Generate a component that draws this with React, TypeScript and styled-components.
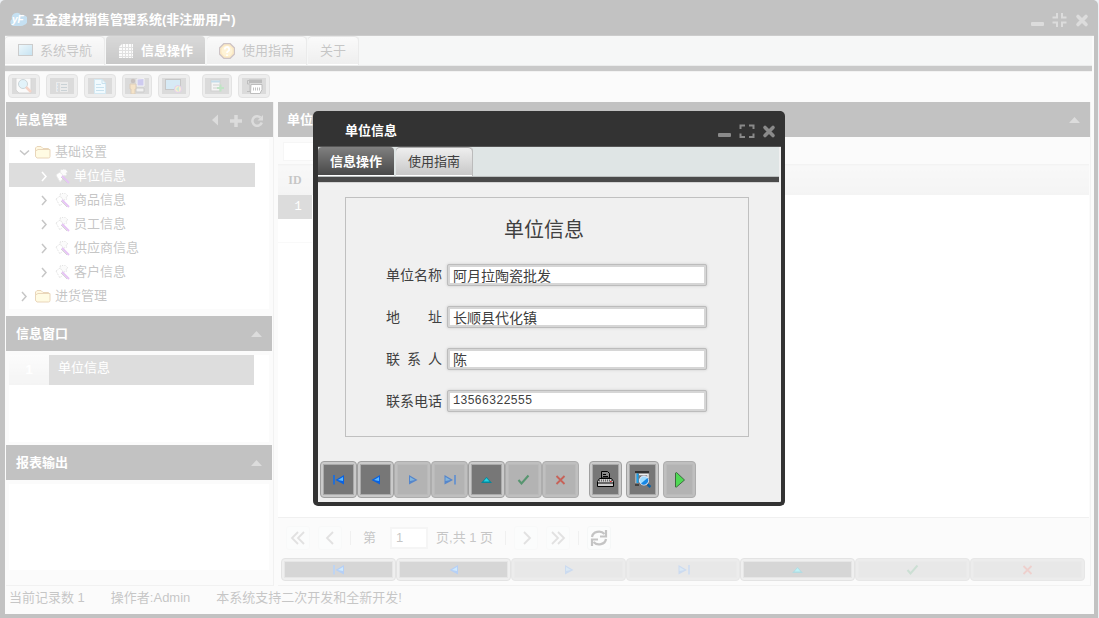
import React from 'react';
import styled, { createGlobalStyle, css } from 'styled-components';

const sans = `"Liberation Sans", "Noto Sans CJK SC", sans-serif`;
const mono = `"Liberation Mono", "Noto Sans CJK SC", monospace`;

const GlobalStyle = createGlobalStyle`
  *, *::before, *::after { box-sizing: border-box; }
  body {
    margin: 0;
    background: #c4cfdc;
    color: #404040;
    font-family: ${sans};
    font-size: 13px;
    line-height: 20px;
  }
  button, input, h1, h2, h3, ul, table, th, td { font: inherit; color: inherit; margin: 0; padding: 0; }
  button { border: 0; background: none; }
  svg { display: block; flex: none; }
`;

/* ---------- window frame ---------- */

const AppWindow = styled.div`
  display: flex;
  flex-direction: column;
  min-height: 100vh;
  margin-right: 1px;
  border: solid #333;
  border-width: 0 4px 4px 5px;
  border-radius: 5px 5px 0 0;
  background: #f0f0f0;
`;

const TitleBar = styled.header`
  display: flex;
  align-items: center;
  height: 36px;
  padding: 4px 4px 0 4px;
  gap: 5px;
  background: #333;
  border-bottom: 1px solid #555;
  color: #fff;
`;

const WindowTitle = styled.h1`
  flex: 1;
  font-weight: bold;
`;

const Controls = styled.div`
  display: flex;
  gap: 6px;
`;

const IconButton = styled.button`
  display: flex;
  align-items: center;
  justify-content: center;
  width: 16px;
  height: 16px;
  color: #8a8a8a;
`;

/* ---------- tabs ---------- */

const TabStrip = styled.nav`
  display: flex;
  gap: 2px;
  height: 35px;
  margin-right: 2px;
  background: #dfe5e5;
  border-bottom: 5px solid #4a4a4a;
  box-shadow: inset 0 -1px #bcc0c0, 0 1px #d4d4d4;
`;

const Tab = styled.button<{ $active?: boolean }>`
  display: flex;
  align-items: center;
  gap: 7px;
  height: 29px;
  padding: 2px 12px 0;
  border-radius: 4px 4px 0 0;
  border-bottom: 1px solid #fff;
  background: linear-gradient(#f0f0f0, #c8c8c8);
  box-shadow: inset 0 1px #aaa, 1px 0 #bbb;
  ${(p) =>
    p.$active &&
    css`
      background: linear-gradient(#808080, #484848);
      box-shadow: none;
      color: #fff;
      font-weight: bold;
    `}
`;

/* ---------- buttons ---------- */

const FramedButton = styled.button<{ $tall?: boolean; $fluid?: boolean; $width?: number }>`
  display: flex;
  flex: ${(p) => (p.$fluid ? '1 1 0' : 'none')};
  width: ${(p) => (p.$fluid ? 'auto' : `${p.$width ?? 32}px`)};
  height: ${(p) => (p.$tall ? 37 : 23)}px;
  padding: 2px;
  border: 1px solid #a0a0a0;
  border-radius: 4px;
  background: #cacaca;
  &:disabled {
    border-color: #adadad;
    background: #bfbfbf;
  }
`;

const ButtonFace = styled.span`
  display: flex;
  flex: 1;
  align-items: center;
  justify-content: center;
  border: 1px solid #aaa;
  background: #777;
  ${FramedButton}:disabled & {
    border-color: #bababa;
    background: #b3b3b3;
  }
`;

const ToolButton = styled.button<{ $narrow?: boolean; $gapAfter?: boolean }>`
  display: flex;
  align-items: center;
  justify-content: center;
  width: ${(p) => (p.$narrow ? 30 : 32)}px;
  height: 24px;
  margin-right: ${(p) => (p.$gapAfter ? 6 : 0)}px;
  border: 1px solid #a0a0a0;
  border-radius: 4px;
  background: #c6c6c6;
`;

const ToolFace = styled.span`
  display: flex;
  align-items: center;
  justify-content: center;
  width: 24px;
  height: 16px;
  background: #868686;
`;

const Toolbar = styled.div`
  display: flex;
  gap: 6px;
  padding: 3px 3px 4px;
`;

/* ---------- work area ---------- */

const WorkArea = styled.main`
  display: grid;
  grid-template-columns: 268px minmax(0, 1fr);
  gap: 4px;
  flex: 1;
  padding: 0 3px 0 1px;
`;

const Sidebar = styled.aside`
  display: flex;
  flex-direction: column;
  border: solid #d0d0d0;
  border-width: 0 1px 1px 0;
`;

const Section = styled.section<{ $grow?: boolean }>`
  display: flex;
  flex-direction: column;
  flex: ${(p) => (p.$grow ? 1 : 'none')};
`;

const PanelHeader = styled.header<{ $wide?: boolean }>`
  display: flex;
  align-items: center;
  gap: 5px;
  height: 35px;
  margin-right: ${(p) => (p.$wide ? 0 : 1)}px;
  padding: 0 8px 0 ${(p) => (p.$wide ? 9 : 10)}px;
  background: #333;
  color: #fff;
`;

const PanelTitle = styled.h2`
  flex: 1;
  font-weight: bold;
`;

const Tree = styled.ul`
  height: 170px;
  margin: 2px 4px 7px 3px;
  background: #fff;
  list-style: none;
`;

const TreeRow = styled.li<{ $child?: boolean; $selected?: boolean }>`
  display: flex;
  align-items: center;
  gap: 5px;
  height: 24px;
  margin-right: 14px;
  padding: 2px 0 0 ${(p) => (p.$child ? 30 : 10)}px;
  ${(p) =>
    p.$selected &&
    css`
      background: #8e8e8e;
      color: #fff;
    `}
`;

const TreeLabel = styled.span`
  margin-left: -1px;
`;

const Sheet = styled.div<{ $height?: number }>`
  height: ${(p) => (p.$height ? `${p.$height}px` : 'auto')};
  flex: ${(p) => (p.$height ? 'none' : 1)};
  margin: 4px 4px 3px 3px;
  background: #fff;
`;

const EmptySheet = styled(Sheet)`
  margin-bottom: 15px;
`;

const RecordTable = styled.table`
  width: 245px;
  border-collapse: collapse;
  tr { height: 30px; }
  th {
    width: 40px;
    background: linear-gradient(#f4f4f4, #dadada);
    color: #fff;
    font-weight: bold;
  }
  td {
    padding: 0 9px 4px;
    background: #8e8e8e;
    color: #fff;
  }
`;

const Content = styled.section`
  display: flex;
  flex-direction: column;
  border: solid #d4d4d4;
  border-width: 0 1px 1px 0;
`;

const SearchRow = styled.div`
  padding: 4px 5px;
  height: 27px;
`;

const SearchInput = styled.input`
  width: 160px;
  height: 19px;
  border: 1px solid #e0e0e0;
  background: #fff;
`;

const DataGrid = styled.div`
  flex: 1;
  margin-right: 1px;
  border-bottom: 1px solid #ccc;
  background: #fff;
`;

const GridTable = styled.table`
  width: 100%;
  border-collapse: collapse;
  font-family: ${mono};
  font-size: 12px;
  th {
    height: 30px;
    border-top: 1px solid #d8d8d8;
    background: linear-gradient(#e8e8e8, #dadada);
    font-family: "Liberation Serif", serif;
    font-weight: bold;
  }
  th:first-child, td:first-child { width: 34px; text-align: center; }
  td { height: 24px; }
  tr.selected td:first-child { background: #8b8b8b; color: #fff; padding-left: 6px; }
  tr.blank td { border-bottom: 1px solid #ececec; }
  tr.blank td + td, tr.blank td:last-child { border-bottom-color: transparent; }
`;

const Pager = styled.div`
  display: flex;
  align-items: center;
  gap: 8px;
  height: 39px;
  padding-left: 8px;
`;

const PageButton = styled.button`
  display: flex;
  align-items: center;
  justify-content: center;
  width: 24px;
  height: 24px;
  border: 1px solid #dde3e3;
  border-radius: 3px;
  background: #f2f3f3;
  color: #3a3a3a;
  &:disabled {
    border-color: #e8ebeb;
    color: #9c9c9c;
  }
`;

const Divider = styled.span`
  width: 1px;
  height: 14px;
  background: #ccc;
`;

const PageLabel = styled.label`
  display: flex;
  align-items: center;
  gap: 14px;
  padding-left: 4px;
`;

const PageInput = styled.input`
  width: 38px;
  height: 22px;
  padding: 0 4px;
  border: 2px solid #dedede;
  background: #fff;
`;

const PageCount = styled.span`
  padding-right: 4px;
`;

const RecordNav = styled.div`
  display: flex;
  padding: 1px 5px 4px 3px;
`;

const StatusBar = styled.footer`
  display: flex;
  gap: 26px;
  height: 28px;
  padding: 2px 4px;
`;

/* ---------- dialog ---------- */

const Mask = styled.div`
  position: fixed;
  inset: 0;
  display: flex;
  align-items: center;
  justify-content: center;
  padding: 0 1px 1px 0;
  background: rgba(255, 255, 255, 0.7);
`;

const Dialog = styled.div`
  width: 472px;
  border: solid #333;
  border-width: 0 4px 4px 5px;
  border-radius: 5px;
  background: #f0f0f0;
`;

const DialogBar = styled(TitleBar)`
  padding: 4px 4px 0 27px;
`;

const FormBox = styled.form`
  display: flex;
  flex-direction: column;
  gap: 20px;
  margin: 15px 32px 24px 27px;
  padding: 18px 40px 24px;
  border: 1px solid #c0c0c0;
  font-size: 14px;
`;

const FormTitle = styled.h3`
  padding-right: 6px;
  font-size: 20px;
  font-weight: normal;
  line-height: 28px;
  text-align: center;
`;

const Field = styled.div`
  display: flex;
  align-items: center;
  gap: 5px;
  height: 22px;
`;

const FieldLabel = styled.label`
  width: 56px;
  text-align-last: justify;
`;

const FieldInput = styled.input`
  width: 260px;
  height: 22px;
  padding: 0 3px;
  border: 3px solid #d6d6d6;
  border-radius: 2px;
  outline: 1px solid #bcbcbc;
  outline-offset: -1px;
  box-shadow: 0 0 3px #ccc;
  background: #fff;
  font-size: 14px;
  line-height: 16px;
  &[type='tel'] {
    font-family: ${mono};
    font-size: 12px;
  }
`;

const DialogNav = styled.div`
  display: flex;
  padding: 0 2px 4px;
`;

const ActionGroup = styled.div`
  display: flex;
  gap: 4px;
  margin-left: 10px;
`;

/* ---------- icons ---------- */

const MinIcon = () => (
  <svg width="14" height="16"><rect x="0" y="10" width="13" height="4" rx="1" fill="currentColor" /></svg>
);
const ExpandIcon = () => (
  <svg width="16" height="16" fill="none" stroke="currentColor" strokeWidth="2">
    <path d="M1.500 6V2.500H6M10 2.500h4.500V6M14.500 10.500V14H10M6 14H1.500v-3.500" />
  </svg>
);
const CompressIcon = () => (
  <svg width="16" height="16" fill="none" stroke="currentColor" strokeWidth="2">
    <path d="M5 1v4.500H.5M10 1v4.500h4.500M14.500 10.500H10V15M5 15v-4.500H.5" />
  </svg>
);
const CloseIcon = () => (
  <svg width="14" height="16"><path d="M3 4.500l8 8M11 4.500l-8 8" stroke="currentColor" strokeWidth="3.600" strokeLinecap="round" /></svg>
);
const UpCaret = () => (
  <svg width="11" height="16"><path d="M0 11l5.500-6 5.500 6z" fill="currentColor" /></svg>
);
const LeftCaret = () => (
  <svg width="7" height="16"><path d="M6 2.500v11L0 8z" fill="currentColor" /></svg>
);
const PlusIcon = () => (
  <svg width="14" height="16"><path d="M1 9h12M7 3v12" stroke="currentColor" strokeWidth="3.500" /></svg>
);
const ReloadIcon = () => (
  <svg width="14" height="16" fill="none">
    <path d="M10.500 5.500A4.800 4.800 0 1 0 11.800 10.500" stroke="currentColor" strokeWidth="2.500" />
    <path d="M13 3v5.500H7.500z" fill="currentColor" />
  </svg>
);

const CloudLogo = () => (
  <svg width="18" height="16">
    <path d="M4 14a4 4 0 0 1-1-7 5 5 0 0 1 9-4 5 5 0 0 1 3 10q-1 1-3 1z" fill="#3d97d2" />
    <text x="3" y="11" fontSize="10" fontStyle="italic" fontWeight="bold" fill="#fff">yF</text>
  </svg>
);

const ScreenIcon = () => (
  <svg width="16" height="16">
    <defs><linearGradient id="screen" x2="1" y2="1"><stop stopColor="#c7e7f5" /><stop offset="1" stopColor="#3f9fd0" /></linearGradient></defs>
    <rect x="1.500" y="1.500" width="14" height="11" fill="url(#screen)" stroke="#555" />
  </svg>
);
const GridIcon = () => (
  <svg width="16" height="16">
    <path d="M4 1h11v14H1V4z" fill="#f4f4f4" />
    <path d="M4 1v14M7 1v14M10 1v14M13 1v14M1 4h14M1 7h14M1 10h14M1 13h14" stroke="#999" strokeWidth="1" shapeRendering="crispEdges" />
  </svg>
);
const HelpIcon = () => (
  <svg width="16" height="16">
    <path d="M5 .5h6L15.500 5v6L11 15.500H5L.5 11V5z" fill="#f3b63c" stroke="#5c3a40" strokeWidth="1.300" />
    <circle cx="8" cy="8" r="5.500" fill="#fbd878" />
    <path d="M5.800 6.500a2.200 2.200 0 1 1 3.200 1.700Q8 8.800 8 10M8 11.500v1.500" fill="none" stroke="#fff" strokeWidth="1.800" />
  </svg>
);

const FolderIcon = () => (
  <svg width="16" height="15" stroke="#b5771a">
    <path d="M.5 10V3l1.500-1.500h4l2 2h5.500V10z" fill="#ffe79a" />
    <path d="M3 4.500h12v7q0 1.500-1.500 1.500H2q-1.500-1-1.500-2V6z" fill="#fff0a0" />
  </svg>
);
const WandIcon = () => (
  <svg width="15" height="15">
    <path d="M5 1l5-1 3 3-2 1 1 2-3 1-3-2z" fill="#f0f0f0" stroke="#999" strokeDasharray="1 1" />
    <path d="M1 6l4-3 4 5-4 5z" fill="#fff" stroke="#aaa" strokeDasharray="2 1" />
    <path d="M7 7l7 7" stroke="#ab39dc" strokeWidth="2" />
    <path d="M6 8l6 6" stroke="#777" />
  </svg>
);
const Chevron = ({ open }: { open?: boolean }) => (
  <svg width="11" height="11" fill="none" stroke="currentColor" strokeWidth="1.500">
    <path d={open ? 'M1 3.500l4.500 4 4.500-4' : 'M3 1l4 4.500-4 4.500'} />
  </svg>
);

const FindDocIcon = () => (
  <svg width="18" height="16">
    <path d="M1 0h15v15H4l-3-3z" fill="#eee" stroke="#777" />
    <circle cx="8" cy="6" r="4.500" fill="#9ed8ef" stroke="#53717b" />
    <path d="M11 9l5 5" stroke="#dd7049" strokeWidth="2.500" />
  </svg>
);
const FormIcon = () => (
  <svg width="14" height="14">
    <rect x="1" y="1" width="12" height="12" fill="#bbb" />
    <path d="M1 2h12M4 4v9" stroke="#555" />
    <path d="M6 5.500h6M6 8.500h6M6 11.500h6" stroke="#4f6975" />
    <path d="M2 5h1M2 8h1M2 11h1" stroke="#257ac2" />
  </svg>
);
const DocIcon = () => (
  <svg width="14" height="15">
    <path d="M1.500.5H9l3.500 3.500v10.500h-11z" fill="#d0effb" stroke="#6fb6d8" />
    <path d="M9 .5v4h4M3 5.500h5M3 8.500h8M3 11.500h8" stroke="#489fc9" fill="none" />
  </svg>
);
const PersonIcon = () => (
  <svg width="18" height="16">
    <path d="M9 1l7-.5V8H9z" fill="#5a50c8" stroke="#ddd" />
    <path d="M8 10h8v4H8z" fill="#ccc" stroke="#555" />
    <circle cx="5" cy="3" r="2.200" fill="#4a3428" />
    <path d="M2 6h6v5H7v5H3v-5H2z" fill="#dca045" stroke="#8a5a1c" />
  </svg>
);
const ScreenGlobeIcon = () => (
  <svg width="18" height="16">
    <rect x=".5" y="1.500" width="15" height="10" fill="#78b9dc" stroke="#444" />
    <circle cx="13" cy="11" r="3.500" fill="#e8c860" stroke="#9a5ac8" />
    <path d="M11 11l3-3v6z" fill="#53b58f" />
  </svg>
);
const AddFormIcon = () => (
  <svg width="14" height="14">
    <rect x="1" y="1" width="9" height="11" fill="#dcdcdc" stroke="#666" />
    <path d="M1 2.500h9" stroke="#3a8bb9" strokeWidth="2" />
    <path d="M3 6h6M3 9h6" stroke="#666" />
    <path d="M7 9h7M10.500 5.500v7" stroke="#2ca33e" strokeWidth="2" />
  </svg>
);
const PrintFormIcon = () => (
  <svg width="17" height="15">
    <path d="M3 .5h13v3.500H3z" fill="#222" />
    <path d="M3 1.500H1.500V5H4M1 12.500h3V6" stroke="#222" fill="none" />
    <path d="M5 5.500h11v5l-2 4H4.500z" fill="#fff" stroke="#222" />
    <path d="M7 10h7" stroke="#333" strokeWidth="3" strokeDasharray="1 1" />
  </svg>
);

type NavKind = 'first' | 'prev' | 'next' | 'last' | 'edit' | 'ok' | 'cancel';

const NavIcon = ({ kind, faded }: { kind: NavKind; faded?: boolean }) => (
  <svg width="13" height="11" opacity={faded ? 0.55 : 1} fill="none">
    {kind === 'first' && <><path d="M2 1v9.500" stroke="#0a6cf0" strokeWidth="1.500" /><path d="M12 1v9.500L3.500 6z" fill="#0a62e0" /><path d="M11 3v4L6 6z" fill="#5cb8ff" /></>}
    {kind === 'prev' && <><path d="M11 1v9.500L2.500 6z" fill="#0a62e0" /><path d="M10 3v4L5 6z" fill="#5cb8ff" /></>}
    {kind === 'next' && <><path d="M3 1v9.500L11.500 6z" fill="#0a62e0" /><path d="M4 3v4l5-1z" fill="#5cb8ff" /></>}
    {kind === 'last' && <><path d="M12 1v9.500" stroke="#0a6cf0" strokeWidth="1.500" /><path d="M1.500 1v9.500L10 6z" fill="#0a62e0" /><path d="M2.500 3v4l5-1z" fill="#5cb8ff" /></>}
    {kind === 'edit' && <><path d="M6.500 3l5.500 6H1z" fill="#04889c" /><path d="M6.500 4l3 3.500h-6z" fill="#22d4e4" /></>}
    {kind === 'ok' && <path d="M1.500 6l3 3.500L11.500 1.500" stroke="#0b7d38" strokeWidth="2" />}
    {kind === 'cancel' && <path d="M2.500 2l8 8M10.500 2l-8 8" stroke="#d9200f" strokeWidth="1.800" />}
  </svg>
);

const PrinterIcon = () => (
  <svg width="17" height="17">
    <path d="M4.500 7V.5h6l2 2V7z" fill="#888" stroke="#000" />
    <path d="M6 3.500h3M6 5.500h5" stroke="#000" />
    <path d="M2.500 7.500h12l2 3v5H.5v-5z" fill="#ccc" stroke="#000" />
    <path d="M2 9.500h13" stroke="#666" strokeWidth="2" strokeDasharray="1 1" />
    <path d="M.5 12h16" stroke="#000" />
    <path d="M13 10.500h1.500" stroke="#e22" />
  </svg>
);
const PreviewIcon = () => (
  <svg width="18" height="17">
    <path d="M1 1h14" stroke="#333" strokeWidth="2" />
    <path d="M5 3.500h9V7" stroke="#eee" fill="none" strokeWidth="1.500" />
    <path d="M2 2.500v9.500" stroke="#ddd" />
    <path d="M3.500 2.500v9.500" stroke="#1aa1ec" strokeWidth="2" />
    <path d="M1 14h4" stroke="#111" />
    <circle cx="10" cy="9.500" r="4.500" fill="#9edcff" stroke="#eef" />
    <path d="M7 12.500a4.300 4.300 0 0 0 6.500-5.500z" fill="#1687e4" />
    <path d="M13.500 13.500l3 2.500" stroke="#0a60a4" strokeWidth="2.500" />
  </svg>
);
const RunIcon = () => (
  <svg width="12" height="16"><path d="M1.500 1v14h1L10.500 8 2.500.5z" fill="#4fd954" stroke="#3d6b40" /></svg>
);

const Angle = ({ d }: { d: string }) => (
  <svg width="16" height="16" fill="none" stroke="currentColor" strokeWidth="1.800"><path d={d} /></svg>
);
const RefreshIcon = () => (
  <svg width="18" height="18" fill="none" stroke="currentColor" strokeWidth="2.200">
    <path d="M2 8a7 6 0 0 1 12.500-3M16 10a7 6 0 0 1-12.500 3" />
    <path d="M16 1v6.500h-6M2 17v-6.500h6" />
  </svg>
);

/* ---------- data ---------- */

const childNodes = ['单位信息', '商品信息', '员工信息', '供应商信息', '客户信息'];

const navButtons: { kind: NavKind; label: string; disabled?: boolean }[] = [
  { kind: 'first', label: '首记录' },
  { kind: 'prev', label: '上一条' },
  { kind: 'next', label: '下一条', disabled: true },
  { kind: 'last', label: '末记录', disabled: true },
  { kind: 'edit', label: '编辑' },
  { kind: 'ok', label: '保存', disabled: true },
  { kind: 'cancel', label: '取消', disabled: true },
];

const tools = [
  { label: '查找', icon: <FindDocIcon /> },
  { label: '表单', icon: <FormIcon /> },
  { label: '文档', icon: <DocIcon /> },
  { label: '用户', icon: <PersonIcon />, narrow: true },
  { label: '屏幕', icon: <ScreenGlobeIcon />, gapAfter: true },
  { label: '新增', icon: <AddFormIcon />, narrow: true },
  { label: '打印', icon: <PrintFormIcon /> },
];

const fields = [
  { id: 'name', label: '单位名称', value: '阿月拉陶瓷批发', type: 'text' },
  { id: 'address', label: '地 址', value: '长顺县代化镇', type: 'text' },
  { id: 'contact', label: '联 系 人', value: '陈', type: 'text' },
  { id: 'phone', label: '联系电话', value: '13566322555', type: 'tel' },
];

const NavButtons = ({ tall }: { tall?: boolean }) => (
  <>
    {navButtons.map((b) => (
      <FramedButton key={b.kind} type="button" aria-label={b.label} disabled={b.disabled} $tall={tall} $fluid={!tall} $width={37}>
        <ButtonFace><NavIcon kind={b.kind} faded={b.disabled} /></ButtonFace>
      </FramedButton>
    ))}
  </>
);

export default function App() {
  return (
    <>
      <GlobalStyle />
      <AppWindow>
        <TitleBar>
          <CloudLogo />
          <WindowTitle>五金建材销售管理系统(非注册用户)</WindowTitle>
          <Controls>
            <IconButton aria-label="最小化"><MinIcon /></IconButton>
            <IconButton aria-label="还原"><CompressIcon /></IconButton>
            <IconButton aria-label="关闭"><CloseIcon /></IconButton>
          </Controls>
        </TitleBar>
        <TabStrip>
          <Tab><ScreenIcon />系统导航</Tab>
          <Tab $active><GridIcon />信息操作</Tab>
          <Tab><HelpIcon />使用指南</Tab>
          <Tab>关于</Tab>
        </TabStrip>
        <Toolbar>
          {tools.map((t) => (
            <ToolButton key={t.label} aria-label={t.label} $narrow={t.narrow} $gapAfter={t.gapAfter}>
              <ToolFace>{t.icon}</ToolFace>
            </ToolButton>
          ))}
        </Toolbar>

        <WorkArea>
          <Sidebar>
            <Section>
              <PanelHeader $wide>
                <PanelTitle>信息管理</PanelTitle>
                <IconButton aria-label="折叠"><LeftCaret /></IconButton>
                <IconButton aria-label="添加"><PlusIcon /></IconButton>
                <IconButton aria-label="刷新"><ReloadIcon /></IconButton>
              </PanelHeader>
              <Tree>
                <TreeRow><Chevron open /><FolderIcon /><TreeLabel>基础设置</TreeLabel></TreeRow>
                {childNodes.map((name, i) => (
                  <TreeRow key={name} $child $selected={i === 0}>
                    <Chevron /><WandIcon /><TreeLabel>{name}</TreeLabel>
                  </TreeRow>
                ))}
                <TreeRow><Chevron /><FolderIcon /><TreeLabel>进货管理</TreeLabel></TreeRow>
              </Tree>
            </Section>
            <Section>
              <PanelHeader>
                <PanelTitle>信息窗口</PanelTitle>
                <IconButton aria-label="收起信息窗口"><UpCaret /></IconButton>
              </PanelHeader>
              <Sheet $height={87}>
                <RecordTable>
                  <tbody><tr><th scope="row">1</th><td>单位信息</td></tr></tbody>
                </RecordTable>
              </Sheet>
            </Section>
            <Section $grow>
              <PanelHeader>
                <PanelTitle>报表输出</PanelTitle>
                <IconButton aria-label="收起报表输出"><UpCaret /></IconButton>
              </PanelHeader>
              <EmptySheet />
            </Section>
          </Sidebar>

          <Content>
            <PanelHeader $wide>
              <PanelTitle>单位信息</PanelTitle>
              <IconButton aria-label="收起列表"><UpCaret /></IconButton>
            </PanelHeader>
            <SearchRow><SearchInput aria-label="搜索" /></SearchRow>
            <DataGrid>
              <GridTable>
                <thead><tr><th scope="col">ID</th><th /></tr></thead>
                <tbody>
                  <tr className="selected"><td>1</td><td /></tr>
                  <tr className="blank"><td /><td /></tr>
                </tbody>
              </GridTable>
            </DataGrid>
            <Pager>
              <PageButton disabled aria-label="首页"><Angle d="M8 2L2 8l6 6M14 2L8 8l6 6" /></PageButton>
              <PageButton disabled aria-label="上一页"><Angle d="M11 2L5 8l6 6" /></PageButton>
              <Divider />
              <PageLabel>第<PageInput defaultValue="1" /></PageLabel>
              <PageCount>页,共 1 页</PageCount>
              <Divider />
              <PageButton disabled aria-label="下一页"><Angle d="M6 2l6 6-6 6" /></PageButton>
              <PageButton disabled aria-label="末页"><Angle d="M2 2l6 6-6 6M8 2l6 6-6 6" /></PageButton>
              <Divider />
              <PageButton aria-label="刷新列表"><RefreshIcon /></PageButton>
            </Pager>
            <RecordNav><NavButtons /></RecordNav>
          </Content>
        </WorkArea>

        <StatusBar>
          <span>当前记录数 1</span>
          <span>操作者:Admin</span>
          <span>本系统支持二次开发和全新开发!</span>
        </StatusBar>
      </AppWindow>

      <Mask>
        <Dialog role="dialog" aria-label="单位信息">
          <DialogBar>
            <WindowTitle as="h2">单位信息</WindowTitle>
            <Controls>
              <IconButton aria-label="最小化"><MinIcon /></IconButton>
              <IconButton aria-label="最大化"><ExpandIcon /></IconButton>
              <IconButton aria-label="关闭"><CloseIcon /></IconButton>
            </Controls>
          </DialogBar>
          <TabStrip>
            <Tab $active>信息操作</Tab>
            <Tab>使用指南</Tab>
          </TabStrip>
          <FormBox>
            <FormTitle>单位信息</FormTitle>
            {fields.map((f) => (
              <Field key={f.id}>
                <FieldLabel htmlFor={f.id}>{f.label}</FieldLabel>
                <FieldInput id={f.id} type={f.type} defaultValue={f.value} />
              </Field>
            ))}
          </FormBox>
          <DialogNav>
            <NavButtons tall />
            <ActionGroup>
              <FramedButton type="button" aria-label="打印" $tall $width={33}><ButtonFace><PrinterIcon /></ButtonFace></FramedButton>
              <FramedButton type="button" aria-label="预览" $tall $width={33}><ButtonFace><PreviewIcon /></ButtonFace></FramedButton>
              <FramedButton type="button" aria-label="执行" disabled $tall $width={33}><ButtonFace><RunIcon /></ButtonFace></FramedButton>
            </ActionGroup>
          </DialogNav>
        </Dialog>
      </Mask>
    </>
  );
}
